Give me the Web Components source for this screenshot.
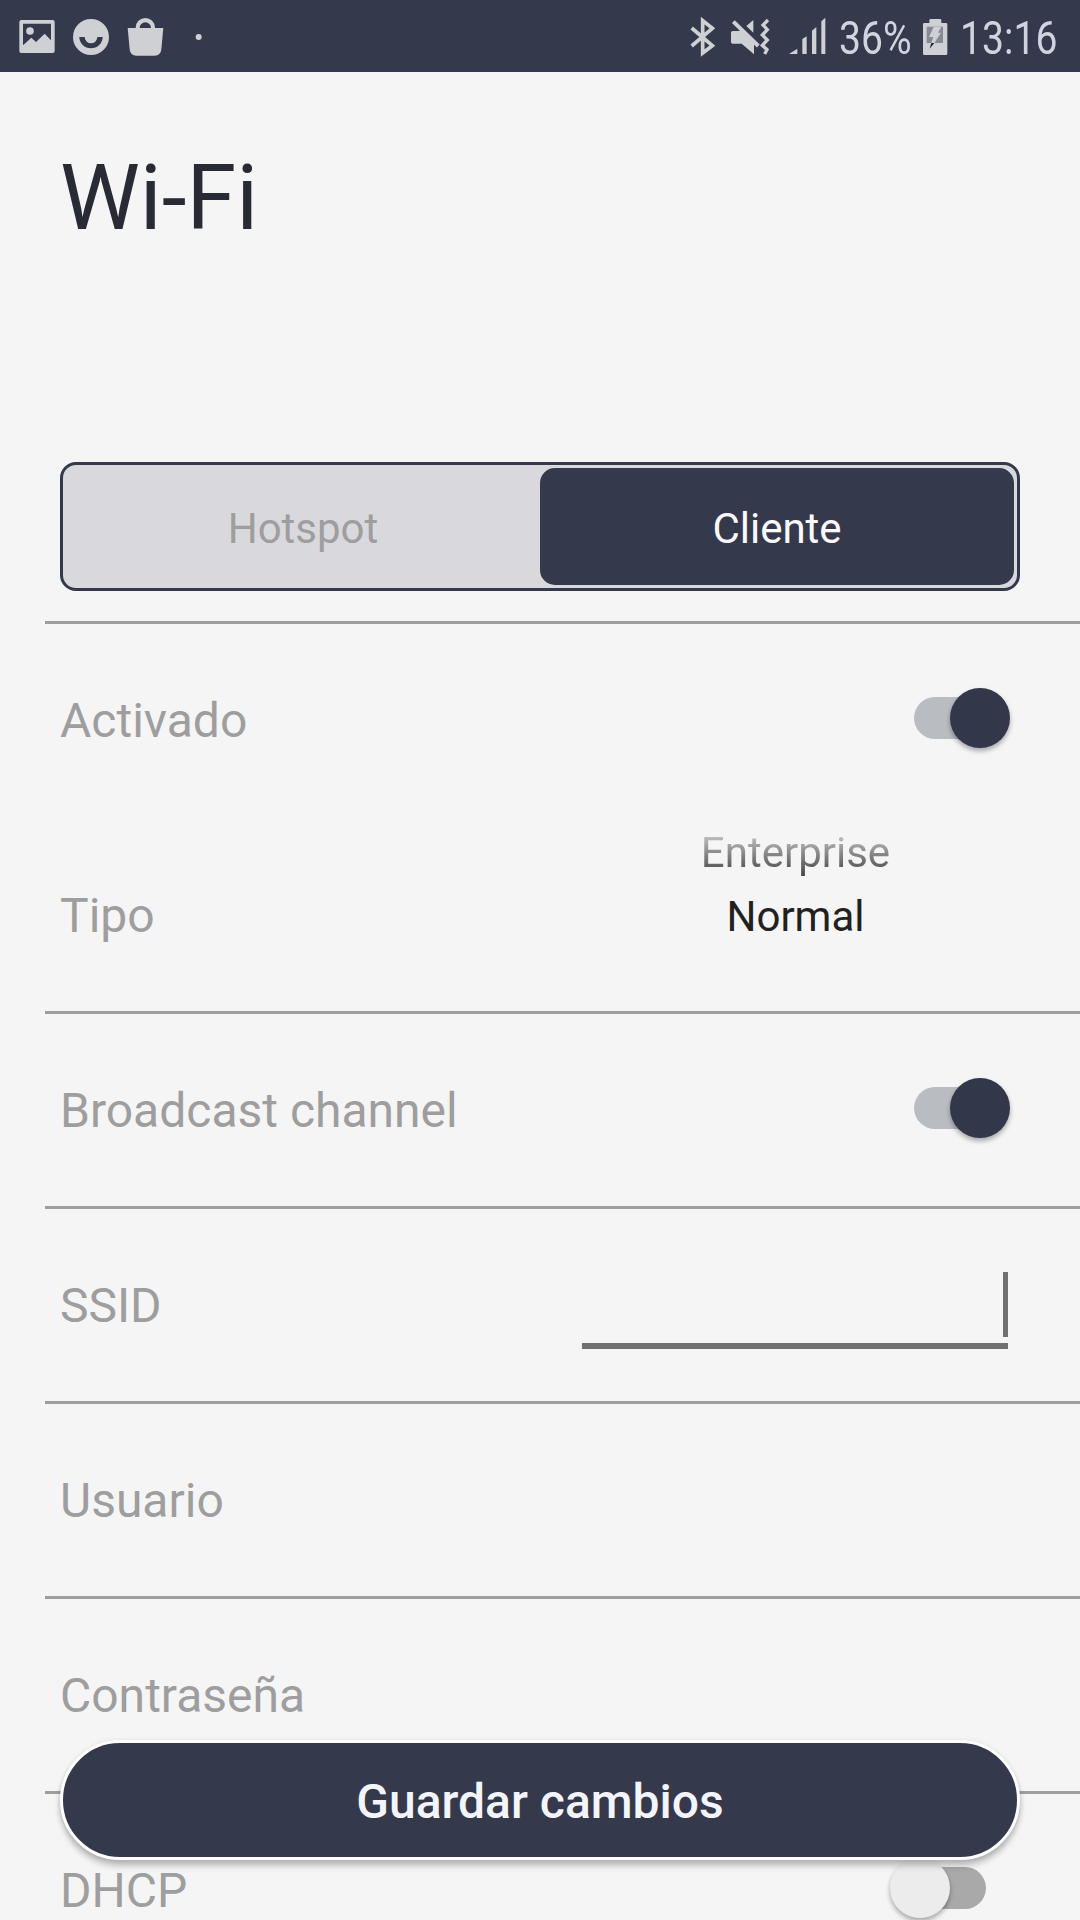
<!DOCTYPE html>
<html lang="es">
<head>
<meta charset="UTF-8">
<title>Wi-Fi</title>
<style>
    html, body {
        margin: 0;
        height: 1920px;
        overflow: hidden;
        background: #f5f5f5;
        font-family: Roboto, "Liberation Sans", sans-serif;
    }
</style>
</head>
<body>
<wifi-page></wifi-page>

<script>
// Iconos de la barra de estado, dibujados en una rejilla de 3 unidades por pixel
const ICONS = {
    image: { x: 57, w: 108, body: '<path fill-rule="evenodd" d="M64 60H158Q164 60 164 66V153Q164 159 158 159H64Q58 159 58 153V66Q58 60 64 60ZM69 71V136L94 113L108 126L134 101L153 121V71Z"/><circle cx="90" cy="93" r="11.5"/>' },
    smile: { x: 219, w: 108, body: '<path fill-rule="evenodd" d="M273 57A54 54 0 0 1 273 165A54 54 0 0 1 273 57ZM238 111A35 34 0 0 0 308 111H292A19 19 0 0 1 254 111Z"/>' },
    bag: { x: 381, w: 111, body: '<path d="M383 84H490L484 148Q482 167 464 167H409Q391 167 389 148Z"/><path d="M407 86V83A29 29 0 0 1 465 83V86H453V83A17 16 0 0 0 419 83V86Z"/>' },
    dot: { x: 585, w: 21, body: '<circle cx="596" cy="111" r="9"/>' },
    bluetooth: { x: 60, w: 75, body: '<path fill="none" stroke="currentColor" stroke-width="11" d="M65 84L127 137L98 159V62L127 85L65 138"/>' },
    mute: { x: 180, w: 120, body: '<path d="M188 93H209V88L252 131V163L215 131H188Q183 131 183 126V98Q183 93 188 93ZM229 78L250 60V98Z"/><path fill="none" stroke="currentColor" stroke-width="12" d="M190 65L265 138"/><path fill="none" stroke="currentColor" stroke-width="10" d="M294 60L279 75L292 89L277 105L292 120L277 136L291 149L284 162"/>' },
    signal: { x: 357, w: 111, body: '<path d="M357 162L382 146V162ZM397 162V117L410 109V162ZM426 162V92L439 81V162ZM454 162V64L466 53V162Z"/>' },
    battery: { x: 759, w: 75, body: '<path d="M763 69H778V61Q778 57 782 57H810Q814 57 814 61V69H828Q832 69 832 73V161Q832 165 828 165H763Q759 165 759 161V73Q759 69 763 69Z"/><path fill="#868a95" d="M770 80H819V129H770Z"/><path d="M791 81H814L804 98H813L793 129H784L790 111H777Z"/><path fill="#1c2030" d="M784 129H793L779 146Z"/>' }
};

class StatusIcon extends HTMLElement {
    constructor() {
        super();
        this.attachShadow({ mode: "open" });
    }

    connectedCallback() {
        const icon = ICONS[this.getAttribute("name")];
        this.shadowRoot.innerHTML = `
            <style>
                :host { display: block; height: 72px; flex: none; }
                svg { display: block; }
            </style>
            <svg width="${icon.w / 3}" height="72" viewBox="${icon.x} 0 ${icon.w} 216" fill="currentColor">${icon.body}</svg>
        `;
    }
}

class StatusBar extends HTMLElement {
    constructor() {
        super();
        this.attachShadow({ mode: "open" });
        this.shadowRoot.innerHTML = `
            <style>
                :host {
                    display: flex;
                    justify-content: space-between;
                    height: 72px;
                    padding: 0 22px 0 19px;
                    box-sizing: border-box;
                    background: #34394b;
                    color: #cfd0d4;
                }
                .side { display: flex; }
                .left { gap: 18px; }
                .left [name="dot"] { margin-left: 13px; }
                .text {
                    font-size: 46px;
                    line-height: 77px;
                    white-space: nowrap;
                    color: #d0d4de;
                    transform-origin: left;
                    transform: scaleX(.85);
                }
                .percent { width: 84px; margin-left: 13px; }
                .clock { width: 98px; margin-left: 12px; }
            </style>
            <div class="side left">
                <status-icon name="image"></status-icon>
                <status-icon name="smile"></status-icon>
                <status-icon name="bag"></status-icon>
                <status-icon name="dot"></status-icon>
            </div>
            <div class="side">
                <status-icon name="bluetooth"></status-icon>
                <status-icon name="mute" style="margin-left: 15px"></status-icon>
                <status-icon name="signal" style="margin-left: 19px"></status-icon>
                <div class="text percent">36%</div>
                <status-icon name="battery"></status-icon>
                <div class="text clock">13:16</div>
            </div>
        `;
    }
}

class SegmentedControl extends HTMLElement {
    constructor() {
        super();
        this.attachShadow({ mode: "open" });
        this.shadowRoot.innerHTML = `
            <style>
                :host {
                    display: grid;
                    grid-template-columns: 1fr 1fr;
                    height: 129px;
                    box-sizing: border-box;
                    padding: 3px;
                    border: 3px solid #34394b;
                    border-radius: 16px;
                    background: #d9d9dd;
                }
                ::slotted(*) {
                    display: flex;
                    align-items: center;
                    justify-content: center;
                    padding-top: 3px;
                    border-radius: 15px;
                    font-size: 42px;
                    color: #9e9e9e;
                }
                ::slotted([selected]) {
                    background: #34394b;
                    color: #fafafe;
                }
            </style>
            <slot></slot>
        `;
    }
}

class SettingRow extends HTMLElement {
    constructor() {
        super();
        this.attachShadow({ mode: "open" });
        this.shadowRoot.innerHTML = `
            <style>
                :host {
                    display: grid;
                    grid-template-columns: 1fr 428px;
                    align-items: center;
                    height: 195px;
                    box-sizing: border-box;
                    margin-left: 45px;
                    padding: 0 70px 0 15px;
                    border-top: 3px solid #9e9e9e;
                }
                :host([plain]) { border-top-color: transparent; }
                .label {
                    font-size: 48px;
                    white-space: nowrap;
                    color: #9e9e9e;
                }
                .control { display: flex; justify-content: flex-end; }
            </style>
            <div class="label"><slot name="label"></slot></div>
            <div class="control"><slot></slot></div>
        `;
    }
}

class ToggleSwitch extends HTMLElement {
    constructor() {
        super();
        this.attachShadow({ mode: "open" });
        this.shadowRoot.innerHTML = `
            <style>
                :host {
                    display: grid;
                    align-items: center;
                    width: 120px;
                    height: 60px;
                    margin: 0 .5px 4px 0;
                }
                .track, .thumb { grid-area: 1 / 1; }
                .track {
                    justify-self: center;
                    width: 72px;
                    height: 42px;
                    border-radius: 21px;
                    background: #a9a9a9;
                }
                .thumb {
                    width: 60px;
                    height: 60px;
                    border-radius: 50%;
                    background: #ececec;
                    box-shadow: 0 3px 5px rgba(0, 0, 0, .32);
                }
                :host([checked]) .track { background: #b9bdc2; }
                :host([checked]) .thumb { justify-self: end; background: #32374a; }
            </style>
            <div class="track"></div>
            <div class="thumb"></div>
        `;
    }
}

class WheelPicker extends HTMLElement {
    constructor() {
        super();
        this.attachShadow({ mode: "open" });
        this.shadowRoot.innerHTML = `
            <style>
                :host {
                    display: block;
                    width: 428px;
                    margin: 0 1px 60px 0;
                    text-align: center;
                    font-size: 42px;
                    line-height: 64px;
                    color: #212121;
                }
                /* la opcion superior se desvanece hacia arriba */
                .previous {
                    background: linear-gradient(#d8d8d8 8px, #bcbcbc 16px, #585858 48px, #404040 58px);
                    -webkit-background-clip: text;
                    background-clip: text;
                    color: transparent;
                }
            </style>
            <div class="previous"><slot name="previous"></slot></div>
            <div><slot></slot></div>
        `;
    }
}

class TextField extends HTMLElement {
    constructor() {
        super();
        this.attachShadow({ mode: "open" });
        this.shadowRoot.innerHTML = `
            <style>
                :host {
                    display: flex;
                    justify-content: flex-end;
                    width: 426px;
                    height: 71px;
                    margin: 10px 2px 0 0;
                    border-bottom: 6px solid #707070;
                }
                .caret { width: 5px; height: 65px; background: #707070; }
            </style>
            <div class="caret"></div>
        `;
    }
}

class SaveButton extends HTMLElement {
    constructor() {
        super();
        this.attachShadow({ mode: "open" });
        this.shadowRoot.innerHTML = `
            <style>
                :host {
                    display: flex;
                    align-items: center;
                    justify-content: center;
                    height: 120px;
                    box-sizing: border-box;
                    padding-top: 3px;
                    border: 3px solid #fff;
                    border-radius: 60px;
                    background: #34394b;
                    color: #f3f5fb;
                    font-size: 48px;
                    font-weight: 500;
                    box-shadow: 0 6px 6px rgba(0, 0, 0, .22), 0 1px 5px rgba(0, 0, 0, .12);
                }
            </style>
            <slot></slot>
        `;
    }
}

class WifiPage extends HTMLElement {
    constructor() {
        super();
        this.attachShadow({ mode: "open" });
        this.shadowRoot.innerHTML = `
            <style>
                :host {
                    display: block;
                    position: relative;
                    height: 1920px;
                    overflow: hidden;
                    background: #f5f5f5;
                }
                h1 {
                    height: 390px;
                    margin: 0;
                    padding: 74px 60px 0;
                    box-sizing: border-box;
                    font-size: 90px;
                    line-height: 106px;
                    font-weight: 400;
                    color: #282b33;
                }
                segmented-control { margin: 0 60px 30px; }
                /* el boton flota sobre la lista */
                save-button {
                    position: absolute;
                    left: 60px;
                    right: 60px;
                    bottom: 60px;
                }
            </style>
            <status-bar></status-bar>
            <h1>Wi-Fi</h1>
            <segmented-control>
                <div>Hotspot</div>
                <div selected>Cliente</div>
            </segmented-control>
            <setting-row>
                <span slot="label">Activado</span>
                <toggle-switch checked></toggle-switch>
            </setting-row>
            <setting-row plain>
                <span slot="label">Tipo</span>
                <wheel-picker><span slot="previous">Enterprise</span>Normal</wheel-picker>
            </setting-row>
            <setting-row>
                <span slot="label">Broadcast channel</span>
                <toggle-switch checked></toggle-switch>
            </setting-row>
            <setting-row>
                <span slot="label">SSID</span>
                <text-field></text-field>
            </setting-row>
            <setting-row>
                <span slot="label">Usuario</span>
            </setting-row>
            <setting-row>
                <span slot="label">Contraseña</span>
            </setting-row>
            <setting-row>
                <span slot="label">DHCP</span>
                <toggle-switch></toggle-switch>
            </setting-row>
            <save-button>Guardar cambios</save-button>
        `;
    }
}

customElements.define('status-icon', StatusIcon);
customElements.define('status-bar', StatusBar);
customElements.define('segmented-control', SegmentedControl);
customElements.define('setting-row', SettingRow);
customElements.define('toggle-switch', ToggleSwitch);
customElements.define('wheel-picker', WheelPicker);
customElements.define('text-field', TextField);
customElements.define('save-button', SaveButton);
customElements.define('wifi-page', WifiPage);
</script>
</body>
</html>
